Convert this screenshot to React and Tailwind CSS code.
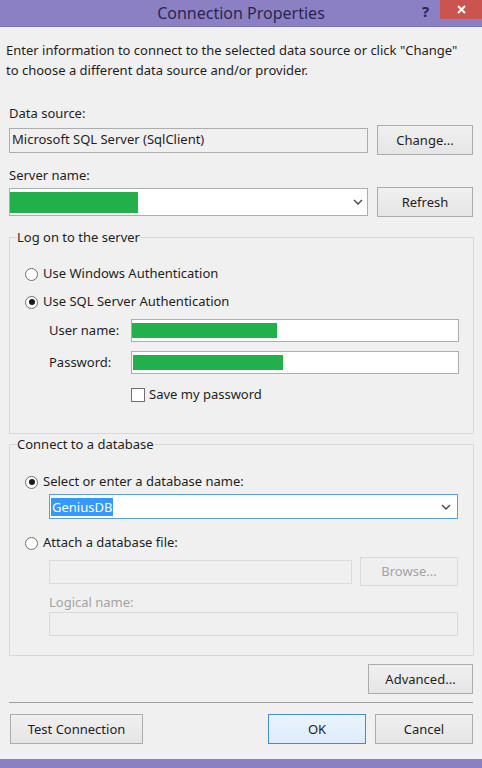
import React from 'react';

const font = { fontFamily: '"Noto Sans", "Open Sans", Arial, sans-serif' };

function Btn({ children, className = '', disabled, primary }) {
  return (
    <div
      className={
        'flex items-center justify-center border text-[13px] leading-none ' +
        (primary
          ? 'border-[#3c8fd6] bg-gradient-to-b from-[#ecf4fc] to-[#dcecfc] text-[#1e1e1e] '
          : disabled
          ? 'border-[#d9d9d9] bg-[#efefef] text-[#a3a3a3] '
          : 'border-[#acacac] bg-gradient-to-b from-[#f0f0f0] to-[#e5e5e5] text-[#1e1e1e] ') +
        className
      }
    >
      {children}
    </div>
  );
}

function Chevron() {
  return (
    <svg width="10" height="6" viewBox="0 0 10 6" className="shrink-0">
      <path d="M1 1 L5 5 L9 1" fill="none" stroke="#404040" strokeWidth="1.3" />
    </svg>
  );
}

function Radio({ checked, label }) {
  return (
    <div className="flex h-5 items-center">
      <span className="flex h-[13px] w-[13px] items-center justify-center rounded-full border border-[#6f6f6f] bg-white">
        {checked && <span className="h-[6px] w-[6px] rounded-full bg-[#1a1a1a]" />}
      </span>
      <span className="ml-[5px]">{label}</span>
    </div>
  );
}

function Redacted({ width }) {
  return <div className="h-[15px] bg-[#22b04b]" style={{ width }} />;
}

export default function App() {
  return (
    <div className="relative h-[768px] w-[482px] overflow-hidden bg-[#f0f0f0] text-[13px] text-[#1e1e1e]" style={font}>
      {/* Title bar */}
      <div className="relative flex h-[27px] items-center justify-center border-b border-[#7b70b4] bg-[#8c80c4]">
        <span className="text-[16px] text-[#2a2650]">Connection Properties</span>
        <span className="absolute left-[422px] top-[0px] text-[15px] font-bold text-[#2a2650]">?</span>
        <div className="absolute right-0 top-0 flex h-[19px] w-[42px] items-center justify-center bg-[#c95450]">
          <svg width="9" height="9" viewBox="0 0 9 9">
            <path d="M1 1 L8 8 M8 1 L1 8" stroke="#fff" strokeWidth="2" />
          </svg>
        </div>
      </div>

      <div className="flex flex-col px-[9px]">
        {/* Intro */}
        <p className="-ml-[3px] mt-[13px] whitespace-nowrap leading-[20px]">
          Enter information to connect to the selected data source or click "Change"
          <br />
          to choose a different data source and/or provider.
        </p>

        <div className="mt-[23px] leading-[20px]">Data source:</div>
        <div className="mt-[2px] flex h-[30px] items-center gap-[9px]">
          <div className="flex h-[25px] w-[359px] items-center border border-[#adadad] bg-[#f0f0f0] pl-[2px]">
            Microsoft SQL Server (SqlClient)
          </div>
          <Btn className="h-[30px] w-[96px]">Change...</Btn>
        </div>

        <div className="mt-[10px] leading-[20px]">Server name:</div>
        <div className="mt-[2px] flex h-[30px] items-center gap-[9px]">
          <div className="flex h-[28px] w-[359px] items-center justify-between border border-[#abadb3] bg-white pr-[4px]">
            <div className="h-[21px] w-[128px] bg-[#22b04b]" />
            <Chevron />
          </div>
          <Btn className="h-[30px] w-[96px]">Refresh</Btn>
        </div>

        {/* Log on group */}
        <fieldset className="mt-[10px] w-[465px] border border-[#d8d8d8]">
          <legend className="ml-[7px] leading-[20px]">Log on to the server</legend>
          <div className="pl-[15px] pr-[14px] pb-[28px] pt-[17px]">
            <Radio label="Use Windows Authentication" />
            <div className="mt-[8px]">
              <Radio checked label="Use SQL Server Authentication" />
            </div>
            <div className="mt-[7px] flex items-center">
              <span className="w-[106px] whitespace-nowrap pl-[24px]">User name:</span>
              <div className="flex h-[23px] flex-1 items-center border border-[#abadb3] bg-white">
                <Redacted width={145} />
              </div>
            </div>
            <div className="mt-[9px] flex items-center">
              <span className="w-[106px] whitespace-nowrap pl-[24px]">Password:</span>
              <div className="flex h-[23px] flex-1 items-center border border-[#abadb3] bg-white pl-[1px]">
                <Redacted width={150} />
              </div>
            </div>
            <div className="ml-[106px] mt-[11px] flex h-5 items-center">
              <span className="h-[14px] w-[14px] border border-[#6f6f6f] bg-white" />
              <span className="ml-[4px]">Save my password</span>
            </div>
          </div>
        </fieldset>

        {/* Database group */}
        <fieldset className="w-[465px] border border-[#d8d8d8]">
          <legend className="ml-[7px] leading-[20px]">Connect to a database</legend>
          <div className="pl-[15px] pr-[15px] pb-[19px] pt-[18px]">
            <Radio checked label="Select or enter a database name:" />
            <div className="ml-[24px] mt-[2px] flex h-[25px] items-center justify-between border border-[#5a9ee0] bg-white pl-[1px] pr-[6px]">
              <span className="bg-[#3399ff] px-[1px] leading-[18px] text-white">GeniusDB</span>
              <Chevron />
            </div>
            <div className="mt-[14px]">
              <Radio label="Attach a database file:" />
            </div>
            <div className="ml-[24px] mt-[4px] flex h-[29px] items-center gap-[8px]">
              <div className="h-[24px] w-[303px] border border-[#dadada] bg-[#f0f0f0]" />
              <Btn disabled className="h-[29px] flex-1">Browse...</Btn>
            </div>
            <div className="ml-[24px] mt-[6px] leading-[20px] text-[#a3a3a3]">Logical name:</div>
            <div className="ml-[24px] h-[24px] border border-[#dadada] bg-[#f0f0f0]" />
          </div>
        </fieldset>

        <div className="mt-[8px] flex justify-end">
          <Btn className="h-[30px] w-[105px]">Advanced...</Btn>
        </div>

        <div className="mt-[8px] h-px bg-[#a0a0a0]" />

        <div className="mt-[11px] flex h-[30px] items-center">
          <Btn className="ml-[1px] h-[30px] w-[133px]">Test Connection</Btn>
          <div className="flex-1" />
          <Btn primary className="h-[30px] w-[98px]">OK</Btn>
          <Btn className="ml-[9px] h-[30px] w-[98px]">Cancel</Btn>
        </div>
      </div>

      <div className="absolute bottom-0 left-0 h-[9px] w-full bg-[#8c80c4]" />
    </div>
  );
}
